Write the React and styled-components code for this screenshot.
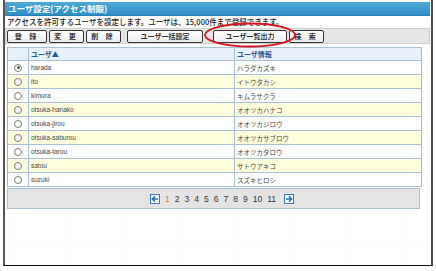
import React from "react";
import styled, { createGlobalStyle } from "styled-components";

const Global = createGlobalStyle`
  html, body { margin: 0; padding: 0; background: #fff; }
  body { width: 436px; height: 271px; overflow: hidden; font-family: "Liberation Sans", "Noto Sans CJK JP", sans-serif; }
`;

const JP = `"Noto Sans CJK JP", "Liberation Sans", sans-serif`;

const Frame = styled.div`
  position: relative;
  box-sizing: border-box;
  margin-left: 3px;
  width: 430px;
  height: 266px;
  border-left: 2px solid #555;
  border-right: 2px solid #4a4a4a;
  border-bottom: 1px solid #111;
  padding: 2px 1px 0 0;
  display: flex;
  flex-direction: column;
  background: #fff;
`;

const TitleBar = styled.div`
  height: 13px;
  background: linear-gradient(#4ea8d9, #2f8fc7);
  border-bottom: 1px solid #2a7db0;
  color: #fff;
  font-family: ${JP};
  font-weight: 700;
  font-size: 8.5px;
  line-height: 13px;
  padding-left: 3px;
  white-space: nowrap;
`;

const Desc = styled.div`
  height: 12px;
  font-family: ${JP};
  font-size: 7.5px;
  font-weight: 500;
  color: #222;
  line-height: 12px;
  padding-left: 2px;
  white-space: nowrap;
`;

const Toolbar = styled.div`
  box-sizing: border-box;
  height: 16px;
  margin: 0 0 3px 0;
  background: #e6e6e6;
  border: 1px solid #cfcfcf;
  display: flex;
  align-items: center;
  padding-left: 1px;
  gap: 2px;
`;

const Btn = styled.button`
  box-sizing: border-box;
  height: 13px;
  width: ${(p) => p.$w}px;
  margin-left: ${(p) => p.$ml || 0}px;
  padding: 0;
  border: 1px solid #333;
  border-radius: 2px;
  background: linear-gradient(#ffffff, #ececec);
  font-family: ${JP};
  font-weight: 700;
  font-size: 7px;
  color: #333;
  letter-spacing: ${(p) => p.$ls || 0}px;
  line-height: 11px;
  white-space: nowrap;
`;

const Ellipse = styled.svg`
  position: absolute;
  left: 198px;
  top: 21px;
`;

const Table = styled.div`
  margin-left: 2px;
  width: 413px;
  border-left: 1px solid #9db8cf;
  border-right: 1px solid #9db8cf;
`;

const Row = styled.div`
  display: grid;
  grid-template-columns: 20px 206px 1fr;
  height: 14px;
  box-sizing: border-box;
  border-bottom: 1px solid #a9c1d6;
  background: ${(p) => (p.$head ? "#e8f1f9" : p.$alt ? "#ffffdd" : "#fff")};
  border-top: ${(p) => (p.$head ? "1px solid #a9c1d6" : "none")};
`;

const Cell = styled.div`
  display: flex;
  align-items: center;
  justify-content: ${(p) => (p.$center ? "center" : "flex-start")};
  padding-left: ${(p) => (p.$center ? 0 : 2)}px;
  border-left: ${(p) => (p.$first ? "none" : "1px solid #a9c1d6")};
  font-family: ${(p) => (p.$jp ? JP : `"Liberation Sans", sans-serif`)};
  font-size: 6.5px;
  color: #444;
  white-space: nowrap;
  overflow: hidden;
`;

const HeadText = styled.span`
  font-family: ${JP};
  font-size: 7px;
  font-weight: 700;
  color: #1b5c99;
`;

const Radio = styled.span`
  box-sizing: border-box;
  width: 8px;
  height: 8px;
  border-radius: 50%;
  border: 1px solid #777;
  background: #fff;
  display: flex;
  align-items: center;
  justify-content: center;
  &::after {
    content: "";
    width: 3px;
    height: 3px;
    border-radius: 50%;
    background: ${(p) => (p.$on ? "#2d7a2d" : "transparent")};
  }
`;

const Pager = styled.div`
  box-sizing: border-box;
  margin: 1px 0 0 2px;
  width: 413px;
  height: 21px;
  background: #e4e4e4;
  border: 1px solid #a9c1d6;
  display: flex;
  align-items: center;
  justify-content: center;
  gap: 5px;
  padding-left: 20px;
`;

const ArrowBtn = styled.span`
  box-sizing: border-box;
  width: 10px;
  height: 10px;
  border: 1px solid #3a78b8;
  background: #fff;
  display: flex;
  align-items: center;
  justify-content: center;
  margin: 0 ${(p) => p.$m}px;
`;

const PageNum = styled.span`
  font-family: "Liberation Sans", sans-serif;
  font-size: 8.5px;
  color: ${(p) => (p.$cur ? "#e57a10" : "#333")};
`;

const Rest = styled.div`
  flex: 1;
  background-color: #fff;
  background-image: radial-gradient(#f6f6f6 0.6px, transparent 0.7px);
  background-size: 7px 7px;
`;

const rows = [
  ["harada", "ハラダカズキ"],
  ["ito", "イトウタカシ"],
  ["kimura", "キムラサクラ"],
  ["otsuka-hanako", "オオツカハナコ"],
  ["otsuka-jirou", "オオツカジロウ"],
  ["otsuka-saburou", "オオツカサブロウ"],
  ["otsuka-tarou", "オオツカタロウ"],
  ["satou", "サトウアキコ"],
  ["suzuki", "スズキヒロシ"],
];

const Arrow = ({ dir }) => (
  <svg width="8" height="8" viewBox="0 0 8 8">
    {dir === "left" ? (
      <path d="M7 4H1.5M4 1.3L1.3 4L4 6.7" stroke="#1f6fb8" strokeWidth="1.5" fill="none" />
    ) : (
      <path d="M1 4h5.5M4 1.3L6.7 4L4 6.7" stroke="#1f6fb8" strokeWidth="1.5" fill="none" />
    )}
  </svg>
);

export default function App() {
  return (
    <>
      <Global />
      <Frame>
        <TitleBar>ユーザ設定(アクセス制限)</TitleBar>
        <Desc>アクセスを許可するユーザを設定します。ユーザは、15,000件まで登録できます。</Desc>
        <Toolbar>
          <Btn $w={40} $ls={3}>登 録</Btn>
          <Btn $w={35} $ls={3}>変 更</Btn>
          <Btn $w={35} $ls={3}>削 除</Btn>
          <Btn $w={76} $ml={4}>ユーザ一括設定</Btn>
          <Btn $w={74} $ml={8}>ユーザ一覧出力</Btn>
          <Btn $w={35} $ls={3}>検 索</Btn>
        </Toolbar>
        <Ellipse width="94" height="28" viewBox="0 0 94 28">
          <ellipse cx="47" cy="14" rx="45" ry="11.5" fill="none" stroke="#d8141c" strokeWidth="1.8" />
        </Ellipse>
        <Table>
          <Row $head>
            <Cell $first />
            <Cell><HeadText>ユーザ▲</HeadText></Cell>
            <Cell><HeadText>ユーザ情報</HeadText></Cell>
          </Row>
          {rows.map(([u, k], i) => (
            <Row key={u} $alt={i % 2 === 1}>
              <Cell $first $center><Radio $on={i === 0} /></Cell>
              <Cell>{u}</Cell>
              <Cell $jp>{k}</Cell>
            </Row>
          ))}
        </Table>
        <Pager>
          <ArrowBtn $m={0}><Arrow dir="left" /></ArrowBtn>
          {[1, 2, 3, 4, 5, 6, 7, 8, 9, 10, 11].map((n) => (
            <PageNum key={n} $cur={n === 1}>{n}</PageNum>
          ))}
          <ArrowBtn $m={3}><Arrow dir="right" /></ArrowBtn>
        </Pager>
        <Rest />
      </Frame>
    </>
  );
}
